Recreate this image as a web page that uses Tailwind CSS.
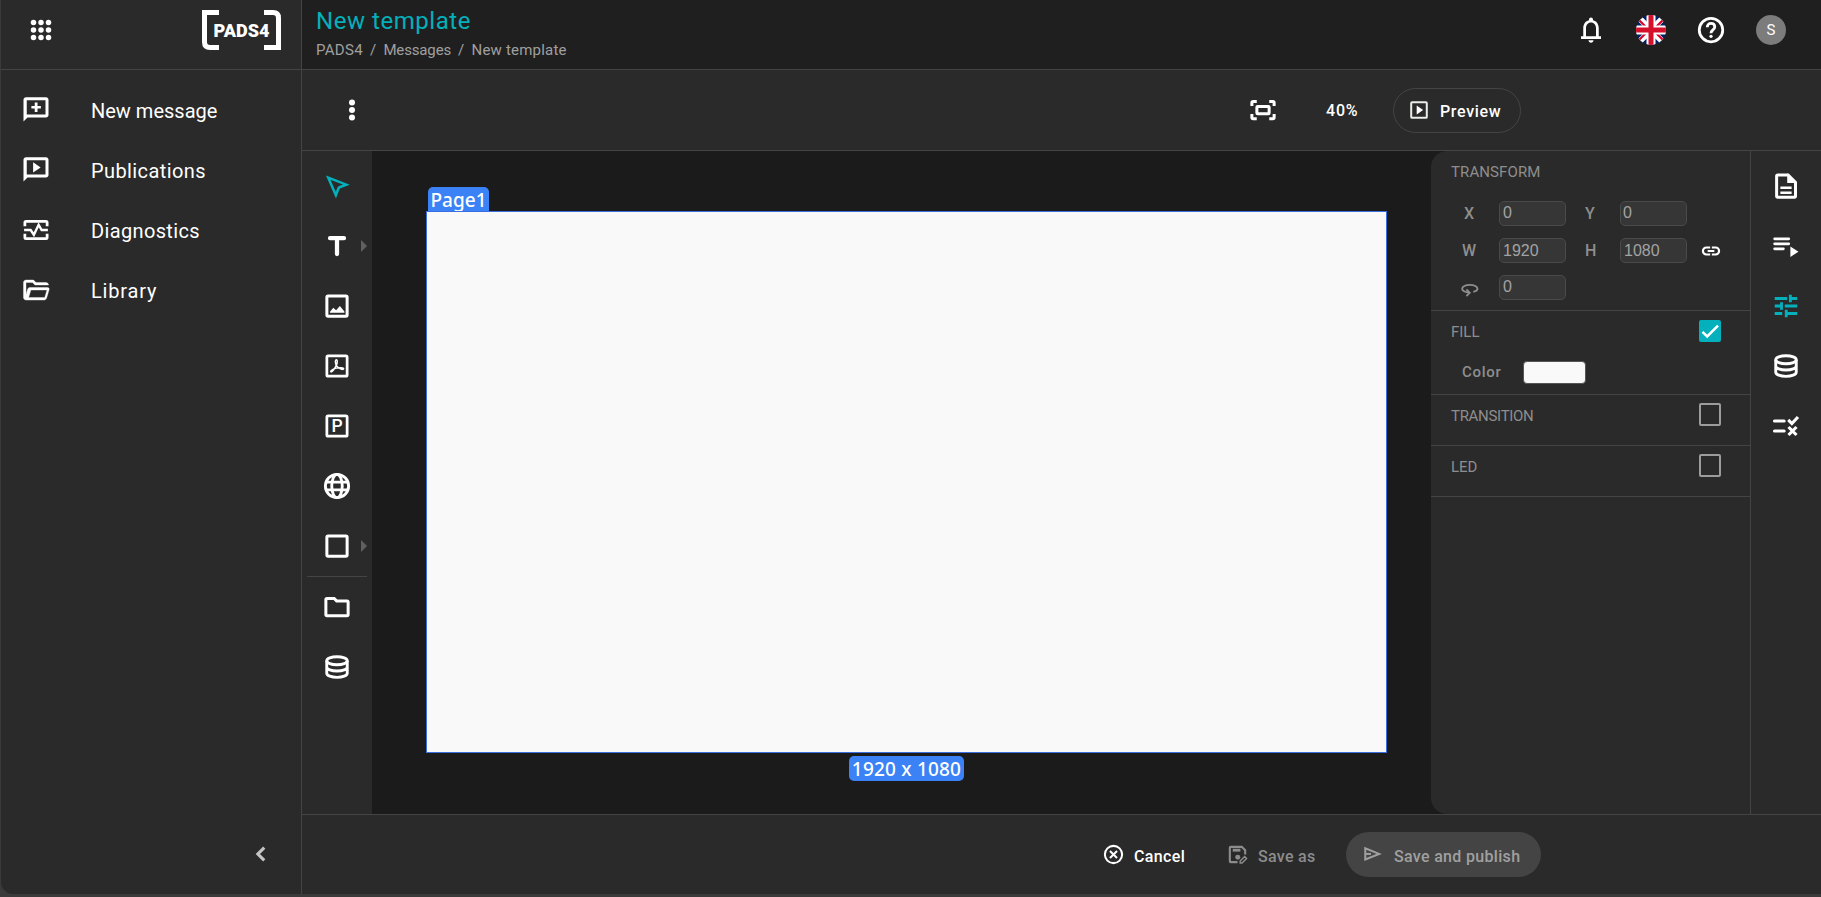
<!DOCTYPE html>
<html lang="en">

<head>
    <meta charset="UTF-8">
    <meta name="viewport" content="width=device-width, initial-scale=1.0">
    <title>PADS4 | New template</title>
    <script src="https://cdn.jsdelivr.net/npm/@tailwindcss/browser@4"></script>
</head>

<body class="h-screen overflow-hidden bg-[#3a3a3b] pl-px pb-[3px] font-[Roboto,sans-serif] text-white">

    <!-- Shared icons -->
    <svg class="hidden">
        <symbol id="database" viewBox="0 0 24 24">
            <g fill="none" stroke="currentColor" stroke-width="2.300">
                <ellipse cx="12" cy="7" rx="8.2" ry="3.2" />
                <path d="M3.8 7v10c0 1.8 3.7 3.3 8.2 3.3s8.2-1.500 8.200-3.300V7M3.800 12c0 1.800 3.700 3.200 8.200 3.200s8.200-1.400 8.200-3.200" />
            </g>
        </symbol>
    </svg>

    <div class="flex h-full">

        <!-- Sidebar -->
        <aside class="flex w-[301px] shrink-0 flex-col rounded-bl-xl border-r border-[#444] bg-[#2a2a2a]">
            <div class="flex h-[70px] items-center justify-between border-b border-[#444] pl-[25px] pr-5 pb-[9px]">
                <svg class="size-[30px]" viewBox="0 0 24 24" fill="currentColor">
                    <circle cx="6" cy="6" r="2.2" /><circle cx="12" cy="6" r="2.2" /><circle cx="18" cy="6" r="2.2" />
                    <circle cx="6" cy="12" r="2.2" /><circle cx="12" cy="12" r="2.2" /><circle cx="18" cy="12" r="2.2" />
                    <circle cx="6" cy="18" r="2.2" /><circle cx="12" cy="18" r="2.2" /><circle cx="18" cy="18" r="2.2" />
                </svg>
                <svg class="h-10 w-[79px]" viewBox="0 0 79 40" fill="none">
                    <path d="M17 2.500H2.500V32q0 5.500 5.500 5.500h9M62 2.500h9q5.500 0 5.500 5.500v29.500H62" stroke="#fff" stroke-width="5" />
                    <text x="11.500" y="26.500" textLength="56" lengthAdjust="spacingAndGlyphs" fill="#fff" font-family="Roboto" font-size="18.500" font-weight="900">PADS4</text>
                </svg>
            </div>

            <nav class="flex flex-1 flex-col pt-[10px] text-[20px]">
                <a class="flex h-[60px] items-center gap-10 pl-5">
                    <svg class="size-[30px]" viewBox="0 0 24 24" fill="currentColor">
                        <path d="M20 1.800H4c-1.100 0-2 .900-2 2v17.400l3.200-3.200H20c1.100 0 2-.900 2-2v-12.200c0-1.100-.900-2-2-2zm-.400 13.700H4.600V4.200h15zM11 13.500h2.200v-2.700h2.700V8.700h-2.700V6H11v2.700H8.300v2.100H11z" />
                    </svg>
                    <span class="mt-px tracking-[0px]">New message</span>
                </a>
                <a class="flex h-[60px] items-center gap-10 pl-5">
                    <svg class="size-[30px]" viewBox="0 0 24 24" fill="currentColor">
                        <path d="M20 1.800H4c-1.100 0-2 .900-2 2v17.400l3.200-3.200H20c1.100 0 2-.900 2-2v-12.200c0-1.100-.900-2-2-2zm-.400 13.700H4.600V4.200h15zM9.700 14l6-4.100-6-4.100z" />
                    </svg>
                    <span class="mt-px tracking-[.4px]">Publications</span>
                </a>
                <a class="flex h-[60px] items-center gap-10 pl-5">
                    <svg class="size-[30px]" viewBox="0 0 24 24" fill="none" stroke="currentColor" stroke-width="2.200">
                        <path d="M3.100 9V6q0-.900.900-.900h16q.900 0 .900.900v3M3.100 15v3q0 .900.900.900h16q.900 0 .900-.900v-3" />
                        <path d="M2.500 12h5.200l2.600 3.800 3.800-8 2.400 4.200h5" stroke-width="1.900" />
                    </svg>
                    <span class="mt-px tracking-[.35px]">Diagnostics</span>
                </a>
                <a class="flex h-[60px] items-center gap-10 pl-5">
                    <svg class="size-[30px]" viewBox="0 0 24 24" fill="currentColor" stroke="currentColor" stroke-width=".3">
                        <path d="M4 20q-.825 0-1.412-.587T2 18V6q0-.825.588-1.412T4 4h6l2 2h8q.825 0 1.413.588T22 8H11.175l-2-2H4v9.500l1.300-4.200q.400-1.300 1.700-1.300h14.200q1.700 0 1.300 1.600l-1.800 6.100Q20.200 20 18.800 20zm2.100-2H19l1.800-6H7.900z" />
                    </svg>
                    <span class="mt-px tracking-[.8px]">Library</span>
                </a>
            </nav>

            <button class="mb-[25px] mr-[25px] self-end text-[#c4c4c4]">
                <svg class="size-[30px]" viewBox="0 0 24 24" fill="none" stroke="currentColor" stroke-width="2.500">
                    <path d="M14.600 6.900L9.500 12l5.100 5.100" />
                </svg>
            </button>
        </aside>

        <div class="flex min-w-0 flex-1 flex-col bg-[#2a2a2a]">

            <!-- Header -->
            <header class="flex h-[70px] shrink-0 justify-between border-b border-[#444] bg-[#1f1f1f] pl-[14px] pr-[35px]">
                <div class="pt-1">
                    <h1 class="text-2xl/[35px] tracking-[.55px] text-[#03b0bc]">New template</h1>
                    <div class="flex gap-[7px] text-[15px]/[22px] tracking-[.3px] text-[#a0a0a0]">
                        <span>PADS4</span>
                        <span>/</span>
                        <span class="tracking-[-.15px]">Messages</span>
                        <span>/</span>
                        <span class="tracking-[.2px]">New template</span>
                    </div>
                </div>
                <div class="flex h-[60px] items-center gap-[30px]">
                    <svg class="size-[30px]" viewBox="0 0 24 24" fill="currentColor">
                        <path d="M12 22.200c1.100 0 2-.900 2-2h-4c0 1.100.900 2 2 2zM18.200 17v-6.500c0-3.100-1.700-5.600-4.600-6.300v-.700a1.600 1.600 0 0 0-3.200 0v.700C7.500 4.900 5.800 7.400 5.800 10.500V17H4v2.100h16V17zm-2.200 0H8v-6.500C8 8 9.500 6 12 6s4 2 4 4.500z" />
                    </svg>
                    <svg class="size-[30px] rounded-full" viewBox="0 0 30 30">
                        <rect width="30" height="30" fill="#012169" />
                        <path d="M0 0l30 30M30 0L0 30" stroke="#fff" stroke-width="6" />
                        <path d="M-1 1l12 12M31 1L19 13M-1 29l12-12M31 29L19 17" stroke="#d80027" stroke-width="2" />
                        <path d="M15 0v30M0 15h30" stroke="#fff" stroke-width="9" />
                        <path d="M15 0v30M0 15h30" stroke="#d5102b" stroke-width="5" />
                    </svg>
                    <svg class="size-[30px]" viewBox="0 0 24 24" fill="none" stroke="currentColor" stroke-width="2.200">
                        <circle cx="12" cy="12" r="9.400" />
                        <path d="M9 9.700c0-1.800 1.300-3 3-3s3 1.100 3 2.800c0 2.300-3 2.500-3 5" />
                        <circle cx="12" cy="17" r="1.300" fill="currentColor" stroke="none" />
                    </svg>
                    <span class="flex size-[30px] items-center justify-center rounded-full bg-[#7c7c7c] text-[15px]">S</span>
                </div>
            </header>

            <!-- Toolbar -->
            <div class="flex h-[81px] shrink-0 items-center border-b border-[#444] pl-[35px] pr-[300px]">
                <svg class="size-[30px]" viewBox="0 0 24 24" fill="currentColor">
                    <circle cx="12" cy="6" r="2.400" /><circle cx="12" cy="12" r="2.400" /><circle cx="12" cy="18" r="2.400" />
                </svg>
                <svg class="ml-auto size-[30px]" viewBox="0 0 24 24" fill="none" stroke="currentColor" stroke-width="2.400">
                    <path d="M3.100 8.800V6.100q0-1 1-1h2.900M17 5.100h2.900q1 0 1 1v2.700M20.900 15.200v2.700q0 1-1 1H17M7 18.900H4.100q-1 0-1-1v-2.700" />
                    <rect x="7.100" y="9.100" width="9.800" height="5.800" rx=".600" />
                </svg>
                <span class="ml-[48px] mt-[2px] w-[35px] whitespace-nowrap text-base font-medium tracking-[.8px]">40%</span>
                <button class="ml-8 flex h-[45px] w-[128px] items-center rounded-full border border-[#444] pl-[14px]">
                    <svg class="size-[22px]" viewBox="0 0 24 24">
                        <rect x="3.500" y="3.500" width="17" height="17" rx="1" fill="none" stroke="#e8eee8" stroke-width="2.200" />
                        <path d="M9.500 7v10l7-5z" fill="#fff" />
                    </svg>
                    <span class="ml-[10px] mt-[3px] text-base font-medium tracking-[.65px]">Preview</span>
                </button>
            </div>

            <div class="flex min-h-0 flex-1">

                <!-- Drawing tools -->
                <div class="flex w-[70px] shrink-0 flex-col items-center pt-[5px]">
                    <button class="flex h-[60px] items-center text-[#03b0bc]">
                        <svg class="size-[30px]" viewBox="0 0 24 24" fill="none" stroke="currentColor" stroke-width="2">
                            <path d="M5 5.300l14.500 5.600-5.500 2.100q-.600.200-.800.800l-2.100 5.600z" />
                        </svg>
                    </button>
                    <button class="relative flex h-[60px] w-full items-center justify-center">
                        <svg class="size-[30px]" viewBox="0 0 24 24" fill="none" stroke="currentColor" stroke-width="3.400" stroke-linecap="round">
                            <path d="M6.400 5.700h11.200M12 6v12.400" />
                        </svg>
                        <span class="absolute right-[5px] border-y-[6px] border-l-[6px] border-y-transparent border-l-[#606060]"></span>
                    </button>
                    <button class="flex h-[60px] items-center">
                        <svg class="size-[30px]" viewBox="0 0 24 24">
                            <rect x="3.900" y="3.900" width="16.200" height="16.200" rx="1" fill="none" stroke="#fff" stroke-width="2.400" />
                            <path d="M6.400 17.300v-.800l2.600-3.200 2.300 2 3-3.400 3.600 4.400v1z" fill="#fff" />
                        </svg>
                    </button>
                    <button class="flex h-[60px] items-center">
                        <svg class="size-[30px]" viewBox="0 0 24 24" fill="none" stroke="#fff">
                            <rect x="3.900" y="3.900" width="16.200" height="16.200" rx="1" stroke-width="2.200" />
                            <path d="M11.400 11.500c-1-2.400-.900-4.300.100-4.500 1.100.200.900 2.500-.100 4.500-1 2.400-3.100 5.400-4.200 5.200-1-.600 1.500-2.400 4.200-3 2.500-.500 5.900-.500 5.900.500 0 1.100-3.700.500-5.900-2.700" stroke-width="1.200" />
                        </svg>
                    </button>
                    <button class="flex h-[60px] items-center">
                        <svg class="size-[30px]" viewBox="0 0 24 24">
                            <rect x="3.900" y="3.900" width="16.200" height="16.200" rx="1" fill="none" stroke="#fff" stroke-width="2.200" />
                            <text x="12" y="17" text-anchor="middle" fill="#fff" font-family="Roboto" font-size="14" font-weight="500">P</text>
                        </svg>
                    </button>
                    <button class="flex h-[60px] items-center">
                        <svg class="size-[30px]" viewBox="0 0 24 24" fill="none" stroke="#fff" stroke-width="2.300">
                            <circle cx="12" cy="12" r="9.300" />
                            <ellipse cx="12" cy="12" rx="4.200" ry="9.300" />
                            <path d="M3.500 8.900h17M3.500 15.100h17" />
                        </svg>
                    </button>
                    <button class="relative flex h-[60px] w-full items-center justify-center">
                        <svg class="size-[30px]" viewBox="0 0 24 24" fill="none" stroke="#fff" stroke-width="2.400">
                            <rect x="3.900" y="3.900" width="16.200" height="16.200" rx="1" />
                        </svg>
                        <span class="absolute right-[5px] border-y-[6px] border-l-[6px] border-y-transparent border-l-[#606060]"></span>
                    </button>
                    <div class="h-px w-[60px] bg-[#444]"></div>
                    <button class="flex h-[60px] items-center">
                        <svg class="size-[30px]" viewBox="0 0 24 24" fill="none" stroke="#fff" stroke-width="2.400">
                            <path d="M3.100 18V6q0-.900.900-.900h5.700l2 2H20q.900 0 .900.900v10q0 .900-.900.900H4q-.900 0-.900-.900z" />
                        </svg>
                    </button>
                    <button class="flex h-[60px] items-center">
                        <svg class="size-[30px]"><use href="#database" /></svg>
                    </button>
                </div>

                <!-- Canvas -->
                <main class="flex flex-1 flex-col bg-[#1b1b1b] pl-[54px] pt-9">
                    <div class="ml-[2px] flex h-6 w-[61px] items-center justify-center rounded-t-[5px] bg-[#3b82f6] pt-[2px] font-['Noto_Sans'] text-[19px] font-medium">Page1</div>
                    <div class="h-[542px] w-[961px] border border-[#3b6fe0] bg-[#f9f9f9]"></div>
                    <div class="ml-[423px] mt-[3px] flex h-[25px] w-[115px] items-center justify-center whitespace-nowrap rounded-[5px] bg-[#3b82f6] pt-[2px] font-['Noto_Sans'] text-[19px] font-medium tracking-[.2px]">1920 x 1080</div>
                </main>

                <!-- Properties -->
                <div class="bg-[#1b1b1b]">
                    <section class="h-full w-[319px] rounded-l-2xl bg-[#2a2a2a] text-base text-[#8e8e8e]">
                        <div class="h-[160px] border-b border-[#444] pt-[9px]">
                            <h2 class="pl-5 text-[15px]/6 tracking-[.1px]">TRANSFORM</h2>
                            <div class="mt-[17px] grid grid-cols-[38px_67px_54px_67px_48px] gap-y-3 pl-[30px] font-medium">
                                <span class="flex h-[25px] items-center pl-[3px]">X</span>
                                <div class="h-[25px] rounded-[5px] border border-[#4a4a4a] bg-[#363636] pl-[3px] font-['Liberation_Sans'] text-base/[22px] font-normal text-[#a3a3a3]">0</div>
                                <span class="flex items-center pl-[19px]">Y</span>
                                <div class="h-[25px] rounded-[5px] border border-[#4a4a4a] bg-[#363636] pl-[2px] font-['Liberation_Sans'] text-base/[22px] font-normal text-[#a3a3a3]">0</div>
                                <span></span>
                                <span class="flex h-[25px] items-center pl-px">W</span>
                                <div class="h-[25px] rounded-[5px] border border-[#4a4a4a] bg-[#363636] pl-[3px] font-['Liberation_Sans'] text-base/[23px] font-normal text-[#a3a3a3]">1920</div>
                                <span class="flex items-center pl-[19px]">H</span>
                                <div class="h-[25px] rounded-[5px] border border-[#4a4a4a] bg-[#363636] pl-[3px] font-['Liberation_Sans'] text-base/[23px] font-normal text-[#a3a3a3]">1080</div>
                                <span class="flex items-center justify-center text-white">
                                    <svg class="size-5" viewBox="0 0 24 24" fill="none" stroke="currentColor" stroke-width="2.600">
                                        <path d="M11 7.800H6.500a4.200 4.200 0 0 0 0 8.400H11M13 7.800h4.500a4.200 4.200 0 0 1 0 8.400H13M8 12h8" />
                                    </svg>
                                </span>
                                <span class="flex h-[25px] items-center">
                                    <svg class="-ml-px mt-[2px] size-5" viewBox="0 0 24 24" fill="none" stroke="currentColor" stroke-width="2.200">
                                        <path d="M16 15.500c3-.700 5-2 5-3.700 0-2.700-4-4.800-9.200-4.800S2.600 9.100 2.600 11.800c0 2.200 2.700 3.900 7.900 4.500M7.700 12.500l4 4-4 4" />
                                    </svg>
                                </span>
                                <div class="h-[25px] rounded-[5px] border border-[#4a4a4a] bg-[#363636] pl-[3px] font-['Liberation_Sans'] text-base/[22px] font-normal text-[#a3a3a3]">0</div>
                            </div>
                        </div>
                        <div class="h-[84px] border-b border-[#444] pt-[9px]">
                            <div class="flex justify-between pl-5 pr-[29px]">
                                <h2 class="text-[15px]/6">FILL</h2>
                                <svg class="size-[22px]" viewBox="0 0 22 22" fill="none">
                                    <rect width="22" height="22" rx="2" fill="#03b0bc" />
                                    <path d="M3.500 11.800l4.700 4.700L19 5.700" stroke="#fff" stroke-width="2.500" />
                                </svg>
                            </div>
                            <div class="mt-[17px] flex items-center pl-[31px]">
                                <span class="-mt-[2px] w-[61px] text-[15px]/[22px] font-medium tracking-[.7px]">Color</span>
                                <span class="h-[23px] w-[63px] rounded border border-[#555] bg-[#f9f9f9]"></span>
                            </div>
                        </div>
                        <div class="flex h-[51px] justify-between border-b border-[#444] pl-5 pr-[29px] pt-2">
                            <h2 class="text-[15px]/[26px] tracking-[-.3px]">TRANSITION</h2>
                            <span class="h-[23px] w-[22px] rounded-[2px] border-2 border-[#9c9c9c]"></span>
                        </div>
                        <div class="flex h-[51px] justify-between border-b border-[#444] pl-5 pr-[29px] pt-2">
                            <h2 class="text-[15px]/[26px]">LED</h2>
                            <span class="h-[23px] w-[22px] rounded-[2px] border-2 border-[#9c9c9c]"></span>
                        </div>
                    </section>
                </div>

                <!-- Panel tabs -->
                <div class="flex w-[71px] shrink-0 flex-col items-center border-l border-[#444] pt-[5px]">
                    <button class="flex h-[60px] items-center">
                        <svg class="size-[30px]" viewBox="0 0 24 24" fill="none" stroke="#fff" stroke-width="2.400">
                            <path d="M4.500 20V4q0-.900.900-.900h8.300l5.900 5.900v11q0 .900-.900.900H5.400Q4.500 20.900 4.500 20z" />
                            <path d="M13.500 3v6h6z" fill="#fff" stroke-width="1" />
                            <path d="M7.500 13.400h9M7.500 17.400h9" stroke-width="2" />
                        </svg>
                    </button>
                    <button class="flex h-[60px] items-center">
                        <svg class="size-[30px]" viewBox="0 0 24 24">
                            <path d="M2.900 6.200h11.300M2.900 10.200h11.300M2.900 14.200h7" stroke="#fff" stroke-width="2.200" stroke-linecap="round" />
                            <path d="M15.500 12.300v8.400l6.500-4.200z" fill="#fff" />
                        </svg>
                    </button>
                    <button class="flex h-[60px] items-center text-[#03b0bc]">
                        <svg class="size-[30px]" viewBox="0 0 24 24" fill="none" stroke="currentColor" stroke-width="2.300">
                            <path d="M3 6h10M15.500 3v6M15.500 6H21M3 12h5.500M8.400 9v6M11 12h10M3 18h6M12.200 15v6M12.200 18H21" />
                        </svg>
                    </button>
                    <button class="flex h-[60px] items-center">
                        <svg class="size-[30px]"><use href="#database" /></svg>
                    </button>
                    <button class="flex h-[60px] items-center">
                        <svg class="size-[30px]" viewBox="0 0 24 24" fill="none" stroke="#fff" stroke-width="2.500">
                            <path d="M2.800 8h7.700M2.800 16h7.700" stroke-linecap="round" />
                            <path d="M13.800 7.100l2.900 2.900 4.900-5.200M14 12.800l6.400 6.400M20.400 12.800L14 19.200" />
                        </svg>
                    </button>
                </div>
            </div>

            <!-- Footer -->
            <footer class="flex h-20 shrink-0 items-center justify-end border-t border-[#444] pr-[280px] text-base font-medium">
                <button class="flex items-center">
                    <svg class="size-[23px]" viewBox="0 0 24 24" fill="none" stroke="currentColor" stroke-width="2.100">
                        <circle cx="12" cy="12" r="9" />
                        <path d="M8.300 8.300l7.400 7.400M15.700 8.300l-7.400 7.400" />
                    </svg>
                    <span class="ml-[9px] mt-[5px] w-[51px] whitespace-nowrap text-left tracking-[.35px]">Cancel</span>
                </button>
                <button class="ml-[41px] flex items-center text-[#8c8c8c]">
                    <svg class="size-[23px]" viewBox="0 0 24 24" fill="none" stroke="currentColor" stroke-width="2.200">
                        <path d="M12 20H5q-1 0-1-1V5q0-1 1-1h11.500L20 7.500V12" />
                        <path d="M7 7.500h8" stroke-width="3" />
                        <circle cx="12.300" cy="14.800" r="2.600" fill="currentColor" stroke="none" />
                        <path d="M14.800 20.800v-2l4.700-4.700 2 2-4.700 4.700z" stroke-width="1.500" />
                    </svg>
                    <span class="ml-[9px] mt-[5px] w-[58px] whitespace-nowrap text-left tracking-[.3px]">Save as</span>
                </button>
                <button class="ml-[30px] flex h-[45px] w-[195px] items-center rounded-full bg-[#444] pl-[14px] text-[#a0a0a0]">
                    <svg class="size-[23px]" viewBox="0 0 24 24" fill="none" stroke="currentColor" stroke-width="2.100">
                        <path d="M5.500 5.500v11.700L20 11.400z" />
                        <path d="M5.500 11.400h6" />
                    </svg>
                    <span class="ml-[11px] mt-[4px] whitespace-nowrap tracking-[.32px]">Save and publish</span>
                </button>
            </footer>
        </div>
    </div>

</body>

</html>
